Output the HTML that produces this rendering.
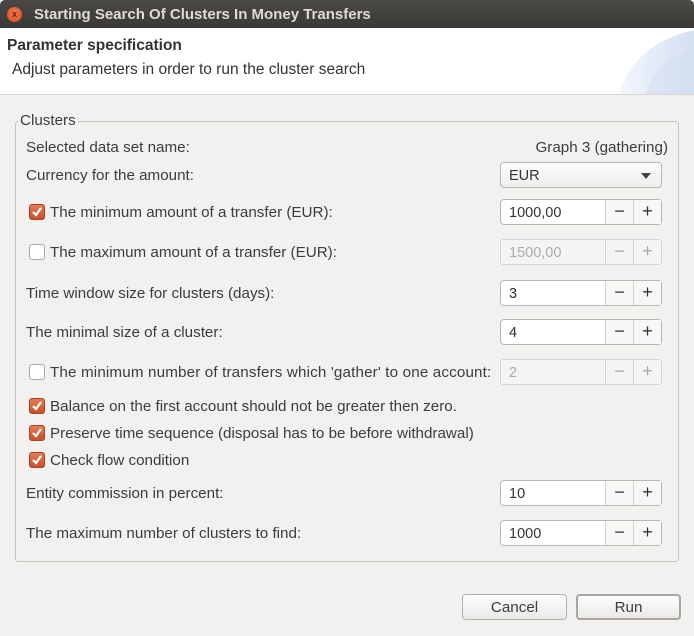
<!DOCTYPE html>
<html><head><meta charset="utf-8"><style>
*{box-sizing:border-box;margin:0;padding:0}
body{width:694px;height:636px;overflow:hidden;background:#f2f1f0;font-family:"Liberation Sans",sans-serif;font-size:15.2px;color:#3c3c3c;position:relative}
.a{position:absolute;white-space:nowrap}
#title{left:0;top:0;width:694px;height:28px;background:linear-gradient(#4a4945,#3a3935);border-radius:5px 5px 0 0}
#close{left:7px;top:7px;width:15px;height:15px;border-radius:50%;background:radial-gradient(circle at 50% 40%,#f37a55,#d9481c);color:#5a2010;font-size:9px;text-align:center;line-height:15px;font-weight:bold}
#tt{left:34px;top:6px;color:#dfdbd2;font-weight:bold;font-size:15px}
#hdr{left:0;top:28px;width:694px;height:67px;background:#fff;border-bottom:1px solid #d6d4d0;overflow:hidden}
.lbl{line-height:22px;margin-top:0px}
.spin{position:absolute;left:500px;width:162px;height:26px;border:1px solid #b9b6b1;border-radius:4px;background:#fff;display:flex}
.spin .f{width:104px;padding-left:8px;line-height:26px;color:#333;font-size:14.5px}
.spin .b{width:28px;border-left:1px solid #d6d3cf;background:#f7f7f6;text-align:center;line-height:23px;font-size:18px;color:#333}
.spin.d{border-color:#d4d2ce;background:#f5f4f3}
.spin.d .f,.spin.d .b{color:#aaa;background:#f5f4f3}
.cb{position:absolute;left:29px;width:16px;height:16px;border-radius:3px}
.cb.on{background:linear-gradient(#e47c55,#c6512b);border:1px solid #a8431f}
.cb.off{background:#fff;border:1px solid #a9a7a3}
.btn{position:absolute;top:594px;height:26px;border:1px solid #b4b1ac;border-radius:4px;background:linear-gradient(#fdfdfd,#eceae8);text-align:center;line-height:26px;color:#3c3c3c}
</style></head><body>
<div id="title" class="a"></div>
<div id="close" class="a">x</div>
<div id="tt" class="a">Starting Search Of Clusters In Money Transfers</div>
<div id="hdr" class="a">
<svg width="694" height="67" style="position:absolute;left:0;top:0"><defs><linearGradient id="g" x1="0" x2="1"><stop offset="0" stop-color="#f3f6fc"/><stop offset="1" stop-color="#d6e0f3"/></linearGradient></defs>
<path d="M618 67 Q635 15 694 2 L694 67Z" fill="url(#g)"/><path d="M645 67 Q655 30 694 22 L694 67Z" fill="#d2ddf1" opacity=".5"/></svg>
<div class="a" style="left:7px;top:9px;font-weight:bold;color:#333;font-size:15.5px">Parameter specification</div>
<div class="a" style="left:12px;top:33px;color:#333;font-size:15.5px">Adjust parameters in order to run the cluster search</div>
</div>
<div class="a" style="left:15px;top:121px;width:664px;height:441px;border:1px solid #c9c6c2;border-radius:3px"></div>
<div class="a" style="left:18px;top:112px;background:#f2f1f0;padding:0 2px">Clusters</div>

<div class="a lbl" style="left:26px;top:137px">Selected data set name:</div>
<div class="a lbl" style="right:26px;top:137px">Graph 3 (gathering)</div>
<div class="a lbl" style="left:26px;top:165px">Currency for the amount:</div>
<div class="spin" style="top:162px;background:linear-gradient(#fdfdfd,#efeeec)"><div class="f" style="width:140px">EUR</div><div style="margin-top:10px;border-left:5px solid transparent;border-right:5px solid transparent;border-top:6px solid #444;width:0;height:0"></div></div>

<div class="cb on" style="top:204px"><svg width="14" height="14"><path d="M3 7 L6 10 L11 3" stroke="#fff" stroke-width="2.2" fill="none"/></svg></div>
<div class="a lbl" style="left:50px;top:202px">The minimum amount of a transfer (EUR):</div>
<div class="spin" style="top:199px"><div class="f">1000,00</div><div class="b">−</div><div class="b">+</div></div>

<div class="cb off" style="top:244px"></div>
<div class="a lbl" style="left:50px;top:242px">The maximum amount of a transfer (EUR):</div>
<div class="spin d" style="top:239px"><div class="f">1500,00</div><div class="b">−</div><div class="b">+</div></div>

<div class="a lbl" style="left:26px;top:283px">Time window size for clusters (days):</div>
<div class="spin" style="top:280px"><div class="f">3</div><div class="b">−</div><div class="b">+</div></div>

<div class="a lbl" style="left:26px;top:322px">The minimal size of a cluster:</div>
<div class="spin" style="top:319px"><div class="f">4</div><div class="b">−</div><div class="b">+</div></div>

<div class="cb off" style="top:364px"></div>
<div class="a lbl" style="left:50px;top:362px;letter-spacing:0.15px">The minimum number of transfers which 'gather' to one account:</div>
<div class="spin d" style="top:359px"><div class="f">2</div><div class="b">−</div><div class="b">+</div></div>

<div class="cb on" style="top:398px"><svg width="14" height="14"><path d="M3 7 L6 10 L11 3" stroke="#fff" stroke-width="2.2" fill="none"/></svg></div>
<div class="a lbl" style="left:50px;top:396px">Balance on the first account should not be greater then zero.</div>
<div class="cb on" style="top:425px"><svg width="14" height="14"><path d="M3 7 L6 10 L11 3" stroke="#fff" stroke-width="2.2" fill="none"/></svg></div>
<div class="a lbl" style="left:50px;top:423px">Preserve time sequence (disposal has to be before withdrawal)</div>
<div class="cb on" style="top:452px"><svg width="14" height="14"><path d="M3 7 L6 10 L11 3" stroke="#fff" stroke-width="2.2" fill="none"/></svg></div>
<div class="a lbl" style="left:50px;top:450px">Check flow condition</div>

<div class="a lbl" style="left:26px;top:483px">Entity commission in percent:</div>
<div class="spin" style="top:480px"><div class="f">10</div><div class="b">−</div><div class="b">+</div></div>

<div class="a lbl" style="left:26px;top:523px">The maximum number of clusters to find:</div>
<div class="spin" style="top:520px"><div class="f">1000</div><div class="b">−</div><div class="b">+</div></div>

<div class="btn" style="left:462px;width:105px">Cancel</div>
<div class="btn" style="left:576px;width:105px;border:2px solid #a9a6a1;line-height:24px">Run</div>
</body></html>
